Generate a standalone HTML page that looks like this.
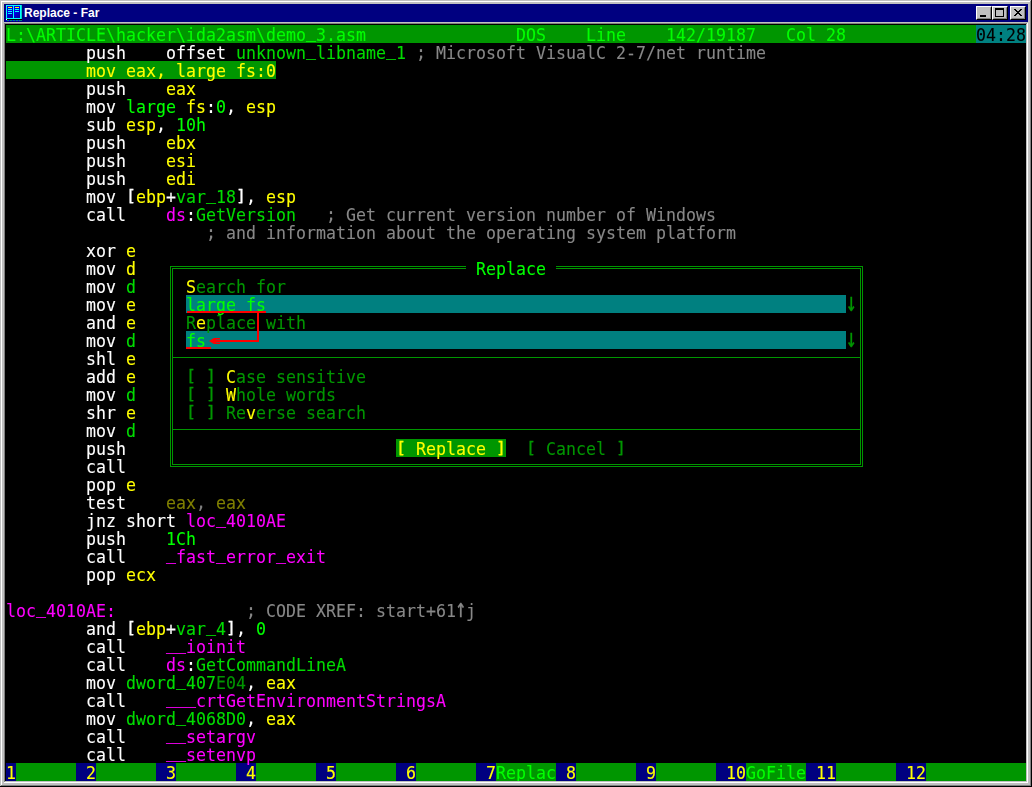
<!DOCTYPE html>
<html lang="en"><head><meta charset="utf-8"><title>Replace - Far</title>
<style>
html,body{margin:0;padding:0;background:#c0c0c0;overflow:hidden}
body{width:1032px;height:787px;position:relative}
#win{position:absolute;left:0;top:0;width:1032px;height:787px;background:#c0c0c0;overflow:hidden}
#win i{position:absolute;display:block}
#title{position:absolute;left:4px;top:4px;width:1024px;height:18px;background:#000080}
#cap{position:absolute;left:20px;top:0;height:18px;line-height:18px;color:#fff;font:bold 12px/18px "Liberation Sans",sans-serif;white-space:pre}
.btn{position:absolute;top:2px;width:16px;height:14px;background:#c0c0c0;box-sizing:border-box;border:1px solid;border-color:#fff #000 #000 #fff}
.btn:before{content:"";position:absolute;left:0;top:0;right:0;bottom:0;border:1px solid;border-color:#c0c0c0 #808080 #808080 #c0c0c0}
#con{position:absolute;left:6px;top:25px;width:1020px;height:756px;background:#000;overflow:hidden}
#txt{position:absolute;left:0;top:0;width:1020px;height:756px;will-change:transform}
.r{position:absolute;left:0;height:20px;line-height:19.19px;overflow:hidden;white-space:pre;color:#fff;
 font-family:"DejaVu Sans Mono","Liberation Mono",monospace;font-size:18.5px;transform-origin:0 0;transform:scaleX(0.89783);-webkit-text-stroke:0.12px currentColor}
.r b{font-weight:normal}
.r .a{display:inline-block;transform-origin:50% 16.00px;transform:scale(1.1,1.408);-webkit-text-stroke:0.3px currentColor}
.r .u{position:relative;top:-2.6px}
.r .k{display:inline-block;transform-origin:0 2.31px;transform:scaleY(0.849);-webkit-text-stroke:.35px currentColor}
.cW{color:#ffffff}.cY{color:#ffff00}.cG{color:#00dc00}.cL{color:#00ff00}.cg{color:#009600}.cM{color:#ff00ff}.cS{color:#888888}.cK{color:#000000}.cO{color:#808000}.cD{color:#808080}
</style></head><body>
<div id="win">
<i style="left:1px;top:1px;width:1030px;height:1px;background:#fff"></i><i style="left:1px;top:1px;width:1px;height:785px;background:#fff"></i><i style="left:0px;top:786px;width:1032px;height:1px;background:#000"></i><i style="left:1031px;top:0px;width:1px;height:787px;background:#000"></i><i style="left:1px;top:785px;width:1030px;height:1px;background:#808080"></i><i style="left:1030px;top:1px;width:1px;height:785px;background:#808080"></i><i style="left:4px;top:23px;width:1023px;height:1px;background:#808080"></i><i style="left:4px;top:23px;width:1px;height:759px;background:#808080"></i><i style="left:5px;top:24px;width:1021px;height:1px;background:#000"></i><i style="left:5px;top:24px;width:1px;height:757px;background:#000"></i><i style="left:4px;top:782px;width:1024px;height:1px;background:#fff"></i><i style="left:1027px;top:23px;width:1px;height:760px;background:#fff"></i><i style="left:5px;top:781px;width:1022px;height:1px;background:#c0c0c0"></i><i style="left:1026px;top:24px;width:1px;height:758px;background:#c0c0c0"></i>
<div id="title"><svg style="position:absolute;left:2px;top:1px" width="16" height="16" viewBox="0 0 16 16" shape-rendering="crispEdges">
<defs><linearGradient id="pg" x1="0" y1="0" x2="0.6" y2="1"><stop offset="0" stop-color="#0000f0"/><stop offset="0.55" stop-color="#0000e0"/><stop offset="1" stop-color="#0000a8"/></linearGradient></defs>
<rect x="0" y="0" width="15" height="14" fill="#00ffff"/><rect x="15" y="0" width="1" height="14" fill="#00d0c0"/>
<rect x="1" y="1" width="6" height="12" fill="url(#pg)"/><rect x="8" y="1" width="6" height="12" fill="url(#pg)"/>
<rect x="2" y="2" width="4" height="1" fill="#ffff00"/><rect x="9" y="2" width="4" height="1" fill="#ffff00"/>
<rect x="2" y="4" width="4" height="1" fill="#00ffff"/><rect x="9" y="4" width="4" height="1" fill="#00ffff"/>
<rect x="2" y="6" width="4" height="1" fill="#00ffff"/><rect x="9" y="6" width="4" height="1" fill="#00ffff"/>
<rect x="2" y="8" width="4" height="1" fill="#00ffff"/>
<rect x="0" y="14" width="1" height="1" fill="#fff"/><rect x="1" y="14" width="15" height="1" fill="#000"/>
<rect x="0" y="15" width="16" height="1" fill="#008080"/>
<path d="M0 15h1v1h-1zM3 15h1v1h-1zM6 15h1v1h-1zM9 15h1v1h-1zM12 15h1v1h-1z" fill="#0000ff"/>
</svg><span id="cap">Replace - Far</span><div class="btn" style="left:972px"><i style="left:3px;top:8px;width:6px;height:2px;background:#000"></i></div>
<div class="btn" style="left:988px"><i style="left:2px;top:1px;width:9px;height:9px;box-sizing:border-box;border:1px solid #000;border-top-width:2px"></i></div>
<div class="btn" style="left:1006px"><svg style="position:absolute;left:3px;top:2px" width="8" height="7" viewBox="0 0 8 7" shape-rendering="crispEdges"><path d="M0 0h2v1h-2zM6 0h2v1h-2zM1 1h2v1h-2zM5 1h2v1h-2zM2 2h4v1h-4zM3 3h2v1h-2zM2 4h4v1h-4zM1 5h2v1h-2zM5 5h2v1h-2zM0 6h2v1h-2zM6 6h2v1h-2z" fill="#000"/></svg></div></div>
<div id="con">
<i style="left:0px;top:0px;width:1020px;height:18px;background:#009600"></i><i style="left:970px;top:0px;width:50px;height:18px;background:#008080"></i><i style="left:0px;top:36px;width:270px;height:18px;background:#009600"></i><i style="left:0px;top:738px;width:1020px;height:18px;background:#009600"></i><i style="left:0px;top:738px;width:10px;height:18px;background:#000080"></i><i style="left:70px;top:738px;width:20px;height:18px;background:#000080"></i><i style="left:150px;top:738px;width:20px;height:18px;background:#000080"></i><i style="left:230px;top:738px;width:20px;height:18px;background:#000080"></i><i style="left:310px;top:738px;width:20px;height:18px;background:#000080"></i><i style="left:390px;top:738px;width:20px;height:18px;background:#000080"></i><i style="left:470px;top:738px;width:20px;height:18px;background:#000080"></i><i style="left:550px;top:738px;width:20px;height:18px;background:#000080"></i><i style="left:630px;top:738px;width:20px;height:18px;background:#000080"></i><i style="left:710px;top:738px;width:30px;height:18px;background:#000080"></i><i style="left:800px;top:738px;width:30px;height:18px;background:#000080"></i><i style="left:890px;top:738px;width:30px;height:18px;background:#000080"></i><i style="left:130px;top:216px;width:760px;height:252px;background:#000000"></i><i style="left:180px;top:270px;width:660px;height:18px;background:#008080"></i><i style="left:180px;top:306px;width:660px;height:18px;background:#008080"></i><i style="left:390px;top:414px;width:110px;height:18px;background:#009600"></i>
<i style="left:164px;top:241px;width:296px;height:1px;background:#009600"></i><i style="left:550px;top:241px;width:307px;height:1px;background:#009600"></i><i style="left:166px;top:243px;width:294px;height:1px;background:#009600"></i><i style="left:550px;top:243px;width:305px;height:1px;background:#009600"></i><i style="left:164px;top:441px;width:693px;height:1px;background:#009600"></i><i style="left:166px;top:439px;width:689px;height:1px;background:#009600"></i><i style="left:164px;top:241px;width:1px;height:201px;background:#009600"></i><i style="left:166px;top:243px;width:1px;height:197px;background:#009600"></i><i style="left:856px;top:241px;width:1px;height:201px;background:#009600"></i><i style="left:854px;top:243px;width:1px;height:197px;background:#009600"></i><i style="left:166px;top:332px;width:689px;height:1px;background:#009600"></i><i style="left:166px;top:404px;width:689px;height:1px;background:#009600"></i>
<div id="txt"><div class="r" style="top:0px"><b class="cL">L:\ARTICLE\hacker\ida2asm\demo</b><b class="cL u">_</b><b class="cL">3.asm</b>               <b class="cL">DOS</b>    <b class="cL">Line</b>    <b class="cL">142/19187</b>   <b class="cL">Col 28</b>             <b class="cK">04:28</b></div>
<div class="r" style="top:18px">        <b class="cW">push    offset </b><b class="cG">unknown</b><b class="cG u">_</b><b class="cG">libname</b><b class="cG u">_</b><b class="cG">1 </b><b class="cS">; Microsoft VisualC 2-7/net runtime</b></div>
<div class="r" style="top:36px">        <b class="cY">mov eax, large fs:0</b></div>
<div class="r" style="top:54px">        <b class="cW">push    </b><b class="cY">eax</b></div>
<div class="r" style="top:72px">        <b class="cW">mov </b><b class="cL">large </b><b class="cY">fs</b><b class="cW">:</b><b class="cL">0</b><b class="cW">, </b><b class="cY">esp</b></div>
<div class="r" style="top:90px">        <b class="cW">sub </b><b class="cY">esp</b><b class="cW">, </b><b class="cL">10h</b></div>
<div class="r" style="top:108px">        <b class="cW">push    </b><b class="cY">ebx</b></div>
<div class="r" style="top:126px">        <b class="cW">push    </b><b class="cY">esi</b></div>
<div class="r" style="top:144px">        <b class="cW">push    </b><b class="cY">edi</b></div>
<div class="r" style="top:162px">        <b class="cW">mov </b><b class="cW k">[</b><b class="cY">ebp</b><b class="cW">+</b><b class="cG">var</b><b class="cG u">_</b><b class="cG">18</b><b class="cW k">]</b><b class="cW">, </b><b class="cY">esp</b></div>
<div class="r" style="top:180px">        <b class="cW">call    </b><b class="cM">ds</b><b class="cW">:</b><b class="cG">GetVersion   </b><b class="cS">; Get current version number of Windows</b></div>
<div class="r" style="top:198px">                    <b class="cS">; and information about the operating system platform</b></div>
<div class="r" style="top:216px">        <b class="cW">xor </b><b class="cY">e</b></div>
<div class="r" style="top:234px">        <b class="cW">mov </b><b class="cY">d</b>                                  <b class="cL">Replace</b></div>
<div class="r" style="top:252px">        <b class="cW">mov </b><b class="cG">d</b>     <b class="cY">S</b><b class="cg">earch for</b></div>
<div class="r" style="top:270px">        <b class="cW">mov </b><b class="cY">e</b>     <b class="cL">large fs</b>                                                          <b class="cg a">↓</b></div>
<div class="r" style="top:288px">        <b class="cW">and </b><b class="cY">e</b>     <b class="cg">R</b><b class="cY">e</b><b class="cg">place with</b></div>
<div class="r" style="top:306px">        <b class="cW">mov </b><b class="cG">d</b>     <b class="cL">fs</b>                                                                <b class="cg a">↓</b></div>
<div class="r" style="top:324px">        <b class="cW">shl </b><b class="cY">e</b></div>
<div class="r" style="top:342px">        <b class="cW">add </b><b class="cY">e</b>     <b class="cg k">[</b> <b class="cg k">]</b><b class="cY"> C</b><b class="cg">ase sensitive</b></div>
<div class="r" style="top:360px">        <b class="cW">mov </b><b class="cG">d</b>     <b class="cg k">[</b> <b class="cg k">]</b><b class="cY"> W</b><b class="cg">hole words</b></div>
<div class="r" style="top:378px">        <b class="cW">shr </b><b class="cY">e</b>     <b class="cg k">[</b> <b class="cg k">]</b><b class="cg"> Re</b><b class="cY">v</b><b class="cg">erse search</b></div>
<div class="r" style="top:396px">        <b class="cW">mov </b><b class="cG">d</b></div>
<div class="r" style="top:414px">        <b class="cW">push</b>                           <b class="cY k">[</b><b class="cY"> Replace </b><b class="cY k">]</b>  <b class="cg k">[</b><b class="cg"> Cancel </b><b class="cg k">]</b></div>
<div class="r" style="top:432px">        <b class="cW">call</b></div>
<div class="r" style="top:450px">        <b class="cW">pop </b><b class="cY">e</b></div>
<div class="r" style="top:468px">        <b class="cW">test    </b><b class="cO">eax</b><b class="cD">, </b><b class="cO">eax</b></div>
<div class="r" style="top:486px">        <b class="cW">jnz short </b><b class="cM">loc</b><b class="cM u">_</b><b class="cM">4010AE</b></div>
<div class="r" style="top:504px">        <b class="cW">push    </b><b class="cL">1Ch</b></div>
<div class="r" style="top:522px">        <b class="cW">call    </b><b class="cM u">_</b><b class="cM">fast</b><b class="cM u">_</b><b class="cM">error</b><b class="cM u">_</b><b class="cM">exit</b></div>
<div class="r" style="top:540px">        <b class="cW">pop </b><b class="cY">ecx</b></div>
<div class="r" style="top:576px"><b class="cM">loc</b><b class="cM u">_</b><b class="cM">4010AE:</b>             <b class="cS">; CODE XREF: start+61</b><b class="cS a">↑</b><b class="cS">j</b></div>
<div class="r" style="top:594px">        <b class="cW">and </b><b class="cW k">[</b><b class="cY">ebp</b><b class="cW">+</b><b class="cG">var</b><b class="cG u">_</b><b class="cG">4</b><b class="cW k">]</b><b class="cW">, </b><b class="cL">0</b></div>
<div class="r" style="top:612px">        <b class="cW">call    </b><b class="cM u">__</b><b class="cM">ioinit</b></div>
<div class="r" style="top:630px">        <b class="cW">call    </b><b class="cM">ds</b><b class="cW">:</b><b class="cG">GetCommandLineA</b></div>
<div class="r" style="top:648px">        <b class="cW">mov </b><b class="cG">dword</b><b class="cG u">_</b><b class="cG">407</b><b class="cg">E04</b><b class="cW">, </b><b class="cY">eax</b></div>
<div class="r" style="top:666px">        <b class="cW">call    </b><b class="cM u">___</b><b class="cM">crtGetEnvironmentStringsA</b></div>
<div class="r" style="top:684px">        <b class="cW">mov </b><b class="cG">dword</b><b class="cG u">_</b><b class="cG">4068D0</b><b class="cW">, </b><b class="cY">eax</b></div>
<div class="r" style="top:702px">        <b class="cW">call    </b><b class="cM u">__</b><b class="cM">setargv</b></div>
<div class="r" style="top:720px">        <b class="cW">call    </b><b class="cM u">__</b><b class="cM">setenvp</b></div>
<div class="r" style="top:738px"><b class="cY">1</b>      <b class="cY"> 2</b>      <b class="cY"> 3</b>      <b class="cY"> 4</b>      <b class="cY"> 5</b>      <b class="cY"> 6</b>      <b class="cY"> 7</b><b class="cL">Replac</b><b class="cY"> 8</b>      <b class="cY"> 9</b>      <b class="cY"> 10</b><b class="cL">GoFile</b><b class="cY"> 11</b>      <b class="cY"> 12</b></div>
</div>
<svg style="position:absolute;left:0;top:0" width="1020" height="756" viewBox="0 0 1020 756">
<g fill="#ff0000">
<rect x="181" y="286" width="79" height="2"/>
<rect x="251" y="286" width="2" height="31"/>
<rect x="207" y="315" width="46" height="2"/>
<polygon points="203,316 208,313 214,313 214,314.5 210,314.5 210,317.5 214,317.5 214,319 208,319"/>
<rect x="180" y="322" width="25" height="2"/>
</g></svg>
</div>
</div>
</body></html>
